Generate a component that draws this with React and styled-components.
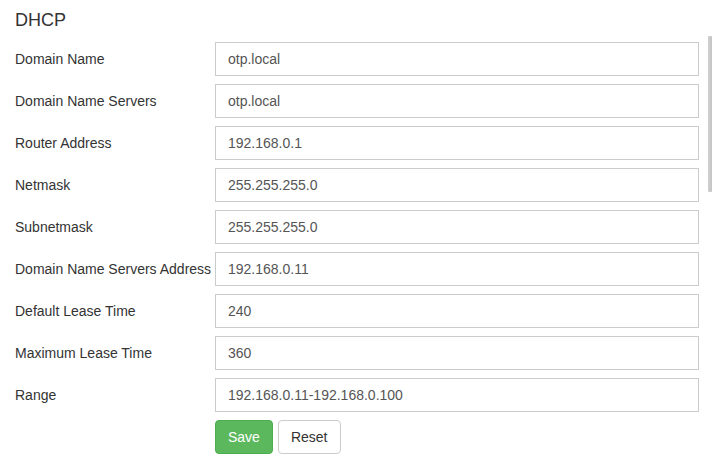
import React from "react";
import styled, { createGlobalStyle } from "styled-components";

const Global = createGlobalStyle`
  html, body { margin: 0; padding: 0; background: #fff; }
  body { font-family: "Liberation Sans", Arial, sans-serif; color: #333; }
  * { box-sizing: border-box; }
`;

const Page = styled.div`
  position: relative;
  width: 714px;
  height: 469px;
  overflow: hidden;
  padding: 10px 16px 0 15px;
`;

const Title = styled.h3`
  margin: 0 0 12px;
  font-size: 18px;
  font-weight: 400;
  line-height: 20px;
  color: #333;
`;

const Form = styled.form`
  display: grid;
  grid-template-columns: 200px 484px;
  row-gap: 8px;
`;

const Label = styled.label`
  font-size: 14px;
  line-height: 34px;
  color: #333;
  white-space: nowrap;
`;

const Input = styled.input`
  height: 34px;
  width: 100%;
  padding: 6px 12px;
  font-family: "Liberation Sans", Arial, sans-serif;
  font-size: 14px;
  color: #555;
  background: #fff;
  border: 1px solid #ccc;
  border-radius: 0;
  outline: none;
`;

const Actions = styled.div`
  grid-column: 2;
  display: flex;
  gap: 5px;
`;

const Button = styled.button`
  height: 34px;
  padding: 6px 12px;
  font-family: "Liberation Sans", Arial, sans-serif;
  font-size: 14px;
  line-height: 20px;
  border-radius: 4px;
  border: 1px solid ${(p) => (p.$primary ? "#4cae4c" : "#ccc")};
  background: ${(p) => (p.$primary ? "#5cb85c" : "#fff")};
  color: ${(p) => (p.$primary ? "#fff" : "#333")};
  cursor: pointer;
`;

const Thumb = styled.div`
  position: absolute;
  right: 2px;
  top: 36px;
  width: 4px;
  height: 156px;
  background: linear-gradient(to right, #d0d0d0, #c4c4c4);
  border-radius: 1px;
`;

const fields = [
  ["Domain Name", "otp.local"],
  ["Domain Name Servers", "otp.local"],
  ["Router Address", "192.168.0.1"],
  ["Netmask", "255.255.255.0"],
  ["Subnetmask", "255.255.255.0"],
  ["Domain Name Servers Address", "192.168.0.11"],
  ["Default Lease Time", "240"],
  ["Maximum Lease Time", "360"],
  ["Range", "192.168.0.11-192.168.0.100"],
];

export default function App() {
  return (
    <>
      <Global />
      <Page>
        <Title>DHCP</Title>
        <Form onSubmit={(e) => e.preventDefault()}>
          {fields.map(([label, value]) => (
            <React.Fragment key={label}>
              <Label>{label}</Label>
              <Input defaultValue={value} />
            </React.Fragment>
          ))}
          <Actions>
            <Button type="submit" $primary>Save</Button>
            <Button type="reset">Reset</Button>
          </Actions>
        </Form>
        <Thumb />
      </Page>
    </>
  );
}
